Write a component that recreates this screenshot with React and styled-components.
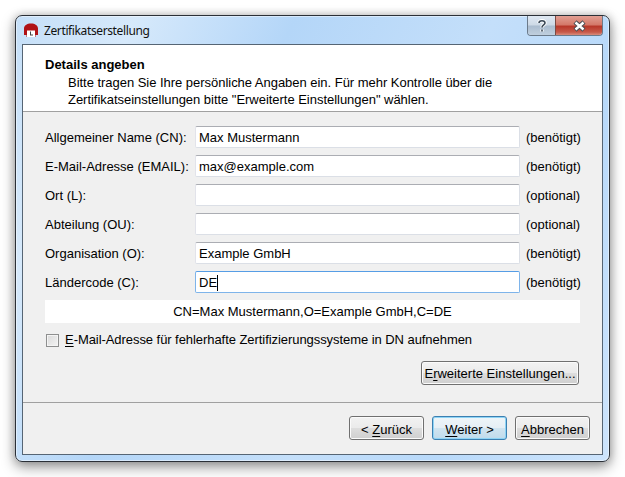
import React from "react";
import styled, { createGlobalStyle } from "styled-components";

const Global = createGlobalStyle`
  html, body { margin: 0; padding: 0; background: #fff; width: 625px; height: 477px; overflow: hidden; }
  body { font-family: "Liberation Sans", Arial, sans-serif; font-size: 13px; color: #000; }
`;
const Page = styled.div`
  padding: 15px 0 0 15px;
`;
const Window = styled.div`
  position: relative;
  box-sizing: border-box;
  width: 595px;
  height: 447px;
  border: 1px solid #2b3037;
  border-radius: 7px;
  background: linear-gradient(115deg, #c5dff8 0%, #d6e9fb 15%, #b4d6f8 35%, #c4dffa 60%, #b8d9fa 78%, #cde4fc 100%);
  box-shadow: inset 0 0 0 1px rgba(255,255,255,.45), 0 5px 14px rgba(0,0,0,.4), 0 0 9px rgba(0,0,0,.2);
  padding: 0 6px 6px 6px;
  display: flex;
  flex-direction: column;
`;
const TitleBar = styled.div`
  height: 28px;
  display: flex;
  align-items: center;
  gap: 6px;
  padding-left: 2px;
  flex: none;
`;
const Title = styled.span`
  font-family: "Noto Sans", "Open Sans", sans-serif;
  font-size: 12px;
  letter-spacing: -.38px;
  color: #111;
`;
const Controls = styled.div`
  position: absolute;
  top: 0;
  right: 6px;
  display: flex;
  height: 19px;
  border: 1px solid #6b7a8a;
  border-top: 0;
  border-radius: 0 0 4px 4px;
  overflow: hidden;
`;
const HelpBtn = styled.div`
  width: 27px;
  display: flex;
  align-items: center;
  justify-content: center;
  background: linear-gradient(#dfe8f2 0%, #cdd9e6 48%, #aabccf 52%, #c0cfde 100%);
  border-right: 1px solid #7a4a44;
`;
const CloseBtn = styled.div`
  width: 46px;
  display: flex;
  align-items: center;
  justify-content: center;
  background: linear-gradient(#e2a094 0%, #d4796a 45%, #b8382a 55%, #c75a4a 85%, #d88c7c 100%);
`;
const Client = styled.div`
  flex: 1;
  border: 1px solid #566574;
  background: #f0f0f0;
  display: flex;
  flex-direction: column;
  min-height: 0;
`;
const Header = styled.div`
  box-sizing: border-box;
  height: 67px;
  flex: none;
  background: #fff;
  border-bottom: 1px solid #a0a0a0;
  padding: 12px 22px 0;
`;
const HeaderTitle = styled.div`
  font-weight: bold;
  line-height: 15px;
  margin-bottom: 2px;
`;
const HeaderText = styled.div`
  padding-left: 23px;
  line-height: 17px;
  letter-spacing: -.03px;
`;
const Body = styled.div`
  flex: 1;
  padding: 14px 22px 0;
  display: flex;
  flex-direction: column;
`;
const Form = styled.div`
  display: grid;
  grid-template-columns: 150px 325px auto;
  column-gap: 0;
  row-gap: 7px;
  align-items: center;
`;
const Label = styled.label`
  box-sizing: border-box;
  height: 22px;
  padding-top: 1px;
  line-height: 22px;
  white-space: nowrap;
`;
const Field = styled.div`
  box-sizing: border-box;
  height: 22px;
  background: #fff;
  border: 1px solid ${p => (p.$focus ? "#7eb4ea" : "#dbdfe6")};
  border-top-color: ${p => (p.$focus ? "#569de5" : "#abadb3")};
  border-left-color: ${p => (p.$focus ? "#7eb4ea" : "#e2e3ea")};
  border-radius: 2px;
  padding: 1px 0 0 3px;
  line-height: 19px;
  display: flex;
  align-items: center;
  white-space: pre;
`;
const Caret = styled.span`
  display: inline-block;
  width: 1px;
  height: 16px;
  background: #000;
`;
const Note = styled.span`
  padding-left: 6px;
  white-space: nowrap;
`;
const DnBar = styled.div`
  margin-top: 7px;
  height: 23px;
  width: 535px;
  background: #fff;
  display: flex;
  align-items: center;
  justify-content: center;
`;
const CheckRow = styled.div`
  margin-top: 8px;
  display: flex;
  align-items: center;
  gap: 6px;
  padding-left: 1px;
  height: 18px;
`;
const CheckLabel = styled.span`
  letter-spacing: -.06px;
  position: relative;
  top: -1px;
`;
const Check = styled.span`
  box-sizing: border-box;
  width: 13px;
  height: 13px;
  border: 1px solid #8e8f8f;
  background: linear-gradient(135deg, #d9d9d9, #f4f4f4);
  box-shadow: inset 0 0 0 1px #f4f4f4;
`;
const U = styled.span`
  text-decoration: underline;
  text-underline-offset: 2px;
`;
const AdvRow = styled.div`
  margin-top: 12px;
  width: 534px;
  display: flex;
  justify-content: flex-end;
`;
const Button = styled.div`
  box-sizing: border-box;
  height: 24px;
  width: ${p => p.$w}px;
  padding-top: ${p => p.$down ? 2 : 0}px;
  border: 1px solid ${p => (p.$primary ? "#3c7fb1" : "#707070")};
  border-radius: 3px;
  background: ${p => p.$primary
    ? "linear-gradient(#eef5f9 0%, #e6eff5 48%, #d0e4f0 52%, #c0dbec 100%)"
    : "linear-gradient(#f2f2f2 0%, #ebebeb 48%, #dddddd 52%, #cfcfcf 100%)"};
  box-shadow: inset 0 0 0 1px ${p => (p.$primary ? "#8ed4f5" : "#fbfbfb")};
  display: flex;
  align-items: center;
  justify-content: center;
  white-space: pre;
`;
const Footer = styled.div`
  box-sizing: border-box;
  height: 52px;
  flex: none;
  border-top: 1px solid #a0a0a0;
  padding: 13px 12px 0 0;
  display: flex;
  justify-content: flex-end;
  gap: 8px;
`;

const rows = [
  ["Allgemeiner Name (CN):", "Max Mustermann", "(benötigt)"],
  ["E-Mail-Adresse (EMAIL):", "max@example.com", "(benötigt)"],
  ["Ort (L):", "", "(optional)"],
  ["Abteilung (OU):", "", "(optional)"],
  ["Organisation (O):", "Example GmbH", "(benötigt)"],
  ["Ländercode (C):", "DE", "(benötigt)", true],
];

export default function App() {
  return (
    <Page>
      <Global />
      <Window>
        <TitleBar>
          <svg width="14" height="14" viewBox="0 0 14 14">
            <path d="M0 12V5.500C0 2.500 3 .5 7 .5s7 2 7 5V12h-2.500v2h-9v-2z" fill="#b01216" />
            <path d="M3 7.500h8V14H3z" fill="#fff" />
            <path d="M6 8.500h1v3h2v1H6z" fill="#444" />
          </svg>
          <Title>Zertifikatserstellung</Title>
        </TitleBar>
        <Controls>
          <HelpBtn>
            <svg width="12" height="14" viewBox="0 0 12 14">
              <path d="M3 4c0-1.500 1.200-2.300 3-2.300S9 2.700 9 4c0 2-3 2-3 4.500M6 10.500v2" fill="none" stroke="#fff" strokeWidth="3.400" />
              <path d="M3 4c0-1.500 1.200-2.300 3-2.300S9 2.700 9 4c0 2-3 2-3 4.500M6 10.500v2" fill="none" stroke="#3d4a58" strokeWidth="1.600" />
            </svg>
          </HelpBtn>
          <CloseBtn>
            <svg width="15" height="12" viewBox="0 0 15 12">
              <path d="M3 2l9 8M12 2l-9 8" stroke="#4a4f55" strokeWidth="4.500" />
              <path d="M3.500 2.500l8 7M11.500 2.500l-8 7" stroke="#fff" strokeWidth="2.400" />
            </svg>
          </CloseBtn>
        </Controls>
        <Client>
          <Header>
            <HeaderTitle>Details angeben</HeaderTitle>
            <HeaderText>
              Bitte tragen Sie Ihre persönliche Angaben ein. Für mehr Kontrolle über die<br />
              Zertifikatseinstellungen bitte "Erweiterte Einstellungen" wählen.
            </HeaderText>
          </Header>
          <Body>
            <Form>
              {rows.map(([label, value, note, focus]) => (
                <React.Fragment key={label}>
                  <Label>{label}</Label>
                  <Field $focus={focus}>{value}{focus && <Caret />}</Field>
                  <Note>{note}</Note>
                </React.Fragment>
              ))}
            </Form>
            <DnBar>CN=Max Mustermann,O=Example GmbH,C=DE</DnBar>
            <CheckRow>
              <Check />
              <CheckLabel><U>E</U>-Mail-Adresse für fehlerhafte Zertifizierungssysteme in DN aufnehmen</CheckLabel>
            </CheckRow>
            <AdvRow>
              <Button $w={158}><span>E<U>r</U>weiterte Einstellungen...</span></Button>
            </AdvRow>
          </Body>
          <Footer>
            <Button $w={75} $down><span>&lt; <U>Z</U>urück</span></Button>
            <Button $w={75} $down $primary><span><U>W</U>eiter &gt;</span></Button>
            <Button $w={75} $down><span><U>A</U>bbrechen</span></Button>
          </Footer>
        </Client>
      </Window>
    </Page>
  );
}
